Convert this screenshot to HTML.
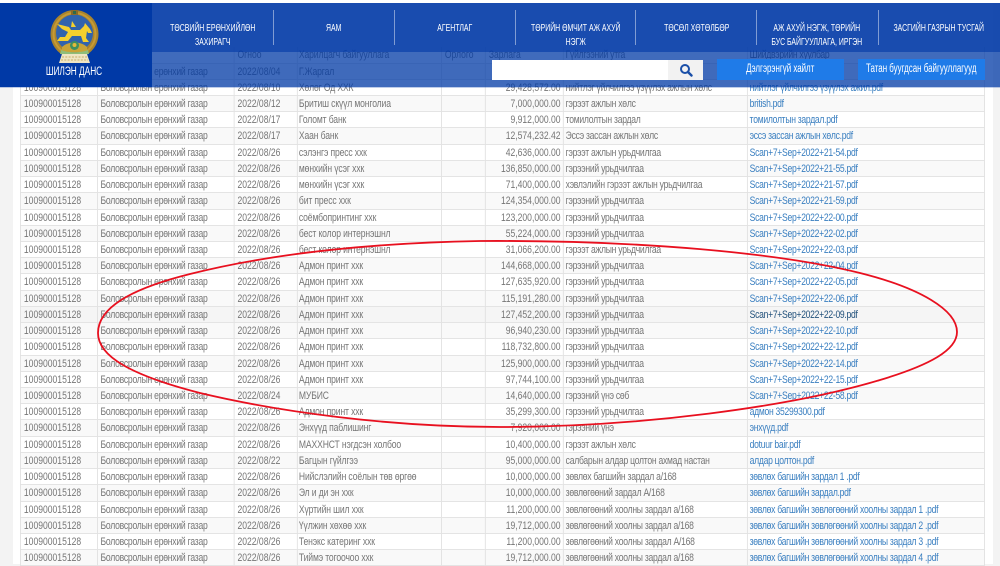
<!DOCTYPE html>
<html lang="mn">
<head>
<meta charset="utf-8">
<title>Шилэн данс</title>
<style>
html,body{margin:0;padding:0;width:1000px;height:564px;overflow:hidden;background:#f3f3f3;font-family:"Liberation Sans","DejaVu Sans",sans-serif}
#paper{position:absolute;left:13px;top:3px;width:980px;height:561px;background:#fff}
#top{position:absolute;left:0;top:0;width:1000px;height:3px;background:#fff}
#tbl{position:absolute;left:20px;top:47.4px;width:1237.2px;transform:scaleX(.78);transform-origin:0 0;font-size:11px;color:#767676;filter:blur(.35px)}
.r{display:grid;grid-template-columns:98.7px 175.6px 80.8px 184.6px 56.4px 100px 235.9px 305.2px;height:16.22px;box-sizing:border-box;line-height:16.6px;white-space:nowrap}
.r:nth-child(even){background:#f9f9f9}
.r.h{background:#f5f5f5}
.r span{display:block;box-sizing:border-box;height:16.22px;padding:0 3px 0 4px;border-left:1px solid #ddd;border-bottom:1px solid #e4e4e4;overflow:hidden}
.r span:nth-child(2){letter-spacing:-.3px;padding-left:3.5px}
.r span:nth-child(3){padding-left:3.5px}
.r span:nth-child(4){letter-spacing:-.17px;padding-left:1.5px}
.r span:nth-child(6){text-align:right}
.r span:nth-child(7){letter-spacing:-.33px;padding-left:2.5px}
.r span:last-child{border-right:1px solid #ddd;color:#3a7fc0;letter-spacing:-.36px;padding-left:2.5px}
.r.h span:last-child{color:#23527c}
#logoBlock{position:absolute;left:0;top:3px;width:152px;height:84px;background:#0039a6}
#band1{position:absolute;left:152px;top:3px;width:848px;height:49px;background:rgba(0,57,166,.9)}
#band2{position:absolute;left:152px;top:52px;width:848px;height:35px;background:rgba(0,57,166,.75)}
#shade{position:absolute;left:0;top:87px;width:1000px;height:1px;background:rgba(0,57,166,.25)}
.nav{position:absolute;top:22px;height:26px;width:121px;text-align:center;color:#fff;font-size:10.5px;line-height:13.5px;white-space:nowrap}
.nav b{display:block;font-weight:normal;width:150%;margin-left:-25%;transform:scaleX(.66)}
.div{position:absolute;top:10px;width:1px;height:35px;background:rgba(255,255,255,.45)}
#brand{position:absolute;left:14px;top:64.5px;width:120px;text-align:center;color:#fff;font-size:11.5px;line-height:15px}
#brand b{display:block;font-weight:normal;transform:scaleX(.72)}
#input{position:absolute;left:492px;top:60px;width:176px;height:20px;background:#fff}
#sbtn{position:absolute;left:668px;top:60px;width:35px;height:20px;background:#f2f2f2}
.btn{position:absolute;top:59px;width:127px;height:21px;background:#1f7be8;color:#fff;font-size:11.5px;line-height:21px;text-align:center;white-space:nowrap}
.btn b{display:block;font-weight:normal;width:150%;margin-left:-25%;transform:scaleX(.69)}
svg{position:absolute}
</style>
</head>
<body>
<div id="paper"></div>
<div id="top"></div>
<div id="tbl">
<div class="r"><span></span><span></span><span>Огноо</span><span>Харилцагч байгууллага</span><span>Орлого</span><span style="text-align:left">Зарлага</span><span>Гүйлгээний утга</span><span style="color:#666">Шийдвэрийн хуулбар</span></div>
<div class="r"><span>100900015128</span><span>Боловсролын ерөнхий газар</span><span>2022/08/04</span><span>Г.Жаргал</span><span></span><span></span><span></span><span></span></div>
<div class="r"><span>100900015128</span><span>Боловсролын ерөнхий газар</span><span>2022/08/10</span><span>Хөлөг Од ХХК</span><span></span><span>29,428,572.00</span><span>нийтлэг үйлчилгээ үзүүлэх ажлын хөлс</span><span>нийтлэг үйлчилгээ үзүүлэх ажил.pdf</span></div>
<div class="r"><span>100900015128</span><span>Боловсролын ерөнхий газар</span><span>2022/08/12</span><span>Бритиш скүүл монголиа</span><span></span><span>7,000,000.00</span><span>гэрээт ажлын хөлс</span><span>british.pdf</span></div>
<div class="r"><span>100900015128</span><span>Боловсролын ерөнхий газар</span><span>2022/08/17</span><span>Голомт банк</span><span></span><span>9,912,000.00</span><span>томилолтын зардал</span><span>томилолтын зардал.pdf</span></div>
<div class="r"><span>100900015128</span><span>Боловсролын ерөнхий газар</span><span>2022/08/17</span><span>Хаан банк</span><span></span><span>12,574,232.42</span><span>Эссэ зассан ажлын хөлс</span><span>эссэ зассан ажлын хөлс.pdf</span></div>
<div class="r"><span>100900015128</span><span>Боловсролын ерөнхий газар</span><span>2022/08/26</span><span>сэлэнгэ пресс ххк</span><span></span><span>42,636,000.00</span><span>гэрээт ажлын урьдчилгаа</span><span>Scan+7+Sep+2022+21-54.pdf</span></div>
<div class="r"><span>100900015128</span><span>Боловсролын ерөнхий газар</span><span>2022/08/26</span><span>мөнхийн үсэг ххк</span><span></span><span>136,850,000.00</span><span>гэрээний урьдчилгаа</span><span>Scan+7+Sep+2022+21-55.pdf</span></div>
<div class="r"><span>100900015128</span><span>Боловсролын ерөнхий газар</span><span>2022/08/26</span><span>мөнхийн үсэг ххк</span><span></span><span>71,400,000.00</span><span>хэвлэлийн гэрээт ажлын урьдчилгаа</span><span>Scan+7+Sep+2022+21-57.pdf</span></div>
<div class="r"><span>100900015128</span><span>Боловсролын ерөнхий газар</span><span>2022/08/26</span><span>бит пресс ххк</span><span></span><span>124,354,000.00</span><span>гэрээний урьдчилгаа</span><span>Scan+7+Sep+2022+21-59.pdf</span></div>
<div class="r"><span>100900015128</span><span>Боловсролын ерөнхий газар</span><span>2022/08/26</span><span>соёмбопринтинг ххк</span><span></span><span>123,200,000.00</span><span>гэрээний урьдчилгаа</span><span>Scan+7+Sep+2022+22-00.pdf</span></div>
<div class="r"><span>100900015128</span><span>Боловсролын ерөнхий газар</span><span>2022/08/26</span><span>бест колор интернэшнл</span><span></span><span>55,224,000.00</span><span>гэрээний урьдчилгаа</span><span>Scan+7+Sep+2022+22-02.pdf</span></div>
<div class="r"><span>100900015128</span><span>Боловсролын ерөнхий газар</span><span>2022/08/26</span><span>бест колор интернэшнл</span><span></span><span>31,066,200.00</span><span>гэрээт ажлын урьдчилгаа</span><span>Scan+7+Sep+2022+22-03.pdf</span></div>
<div class="r"><span>100900015128</span><span>Боловсролын ерөнхий газар</span><span>2022/08/26</span><span>Адмон принт ххк</span><span></span><span>144,668,000.00</span><span>гэрээний урьдчилгаа</span><span>Scan+7+Sep+2022+22-04.pdf</span></div>
<div class="r"><span>100900015128</span><span>Боловсролын ерөнхий газар</span><span>2022/08/26</span><span>Адмон принт ххк</span><span></span><span>127,635,920.00</span><span>гэрээний урьдчилгаа</span><span>Scan+7+Sep+2022+22-05.pdf</span></div>
<div class="r"><span>100900015128</span><span>Боловсролын ерөнхий газар</span><span>2022/08/26</span><span>Адмон принт ххк</span><span></span><span>115,191,280.00</span><span>гэрээний урьдчилгаа</span><span>Scan+7+Sep+2022+22-06.pdf</span></div>
<div class="r h"><span>100900015128</span><span>Боловсролын ерөнхий газар</span><span>2022/08/26</span><span>Адмон принт ххк</span><span></span><span>127,452,200.00</span><span>гэрээний урьдчилгаа</span><span>Scan+7+Sep+2022+22-09.pdf</span></div>
<div class="r"><span>100900015128</span><span>Боловсролын ерөнхий газар</span><span>2022/08/26</span><span>Адмон принт ххк</span><span></span><span>96,940,230.00</span><span>гэрээний урьдчилгаа</span><span>Scan+7+Sep+2022+22-10.pdf</span></div>
<div class="r"><span>100900015128</span><span>Боловсролын ерөнхий газар</span><span>2022/08/26</span><span>Адмон принт ххк</span><span></span><span>118,732,800.00</span><span>гэрээний урьдчилгаа</span><span>Scan+7+Sep+2022+22-12.pdf</span></div>
<div class="r"><span>100900015128</span><span>Боловсролын ерөнхий газар</span><span>2022/08/26</span><span>Адмон принт ххк</span><span></span><span>125,900,000.00</span><span>гэрээний урьдчилгаа</span><span>Scan+7+Sep+2022+22-14.pdf</span></div>
<div class="r"><span>100900015128</span><span>Боловсролын ерөнхий газар</span><span>2022/08/26</span><span>Адмон принт ххк</span><span></span><span>97,744,100.00</span><span>гэрээний урьдчилгаа</span><span>Scan+7+Sep+2022+22-15.pdf</span></div>
<div class="r"><span>100900015128</span><span>Боловсролын ерөнхий газар</span><span>2022/08/24</span><span>МУБИС</span><span></span><span>14,640,000.00</span><span>гэрээний үнэ сөб</span><span>Scan+7+Sep+2022+22-58.pdf</span></div>
<div class="r"><span>100900015128</span><span>Боловсролын ерөнхий газар</span><span>2022/08/26</span><span>Адмон принт ххк</span><span></span><span>35,299,300.00</span><span>гэрээний урьдчилгаа</span><span>адмон 35299300.pdf</span></div>
<div class="r"><span>100900015128</span><span>Боловсролын ерөнхий газар</span><span>2022/08/26</span><span>Энхүүд паблишинг</span><span></span><span>7,920,000.00</span><span>гэрээний үнэ</span><span>энхүүд.pdf</span></div>
<div class="r"><span>100900015128</span><span>Боловсролын ерөнхий газар</span><span>2022/08/26</span><span>МАХХНСТ нэгдсэн холбоо</span><span></span><span>10,400,000.00</span><span>гэрээт ажлын хөлс</span><span>dotuur bair.pdf</span></div>
<div class="r"><span>100900015128</span><span>Боловсролын ерөнхий газар</span><span>2022/08/22</span><span>Багцын гүйлгээ</span><span></span><span>95,000,000.00</span><span>салбарын алдар цолтон ахмад настан</span><span>алдар цолтон.pdf</span></div>
<div class="r"><span>100900015128</span><span>Боловсролын ерөнхий газар</span><span>2022/08/26</span><span>Нийслэлийн соёлын төв өргөө</span><span></span><span>10,000,000.00</span><span>зөвлөх багшийн зардал а/168</span><span>зөвлөх багшийн зардал 1 .pdf</span></div>
<div class="r"><span>100900015128</span><span>Боловсролын ерөнхий газар</span><span>2022/08/26</span><span>Эл и ди эн ххк</span><span></span><span>10,000,000.00</span><span>зөвлөгөөний зардал А/168</span><span>зөвлөх багшийн зардал.pdf</span></div>
<div class="r"><span>100900015128</span><span>Боловсролын ерөнхий газар</span><span>2022/08/26</span><span>Хүртийн шил ххк</span><span></span><span>11,200,000.00</span><span>зөвлөгөөний хоолны зардал а/168</span><span>зөвлөх багшийн зөвлөгөөний хоолны зардал 1 .pdf</span></div>
<div class="r"><span>100900015128</span><span>Боловсролын ерөнхий газар</span><span>2022/08/26</span><span>Үүлжин хөхөө ххк</span><span></span><span>19,712,000.00</span><span>зөвлөгөөний хоолны зардал а/168</span><span>зөвлөх багшийн зөвлөгөөний хоолны зардал 2 .pdf</span></div>
<div class="r"><span>100900015128</span><span>Боловсролын ерөнхий газар</span><span>2022/08/26</span><span>Тенэкс катеринг ххк</span><span></span><span>11,200,000.00</span><span>зөвлөгөөний хоолны зардал А/168</span><span>зөвлөх багшийн зөвлөгөөний хоолны зардал 3 .pdf</span></div>
<div class="r"><span>100900015128</span><span>Боловсролын ерөнхий газар</span><span>2022/08/26</span><span>Тиймэ тогоочоо ххк</span><span></span><span>19,712,000.00</span><span>зөвлөгөөний хоолны зардал а/168</span><span>зөвлөх багшийн зөвлөгөөний хоолны зардал 4 .pdf</span></div>
</div>

<svg width="1000" height="564" style="left:0;top:0" viewBox="0 0 1000 564">
<path d="M480 241C370 243 270 254 190 274C130 289 98 308 98 333C98 356 130 375 200 393C280 412 390 427 500 427C640 427 790 407 880 380C930 365 957 350 957 332C957 310 920 288 860 273C780 253 640 240 480 241Z" fill="none" stroke="#e8101f" stroke-width="1.8"/>
</svg>

<div id="logoBlock"></div>
<div id="band1"></div>
<div id="band2"></div>
<div id="shade"></div>

<svg width="60" height="60" style="left:45px;top:8px" viewBox="45 8 60 60">
<circle cx="74.5" cy="34" r="24" fill="#a8842e"/>
<circle cx="74.5" cy="34" r="21" fill="none" stroke="#c69a34" stroke-width="2"/>
<circle cx="74.5" cy="33" r="18.5" fill="#3163ac"/>
<rect x="71" y="10" width="7" height="5" fill="#8a6a2a"/>
<rect x="73" y="11" width="3" height="3" fill="#2d6a4a"/>
<path d="M57 24L69 27L71 30H80L84 26L85 23L90 29L92 33L88 33L87 31L86 38L89 42H83L81 36H72L68 41H57L60 37H65L68 32L62 29Z" fill="#f5d02e"/>
<path d="M72 21L76 27H71Z" fill="#f5d02e"/>
<path d="M62 47C68 41 81 41 87 47V52H62Z" fill="#c9a436"/>
<circle cx="74.5" cy="45.5" r="4.5" fill="#3f8f5e"/>
<circle cx="74.5" cy="45" r="2" fill="#e3b93a"/>
<path d="M61 50C68 53 81 53 88 50L89 54H60Z" fill="#8fbe7a"/>
<path d="M62 54H87L90 63H59Z" fill="#efe6c4"/>
<path d="M62 57H87M61 60H88" stroke="#b79a4a" stroke-width=".7" stroke-dasharray="2 1.3"/>
</svg>
<div id="brand"><b>ШИЛЭН ДАНС</b></div>

<div class="div" style="left:273px"></div>
<div class="div" style="left:394px"></div>
<div class="div" style="left:515px"></div>
<div class="div" style="left:635px"></div>
<div class="div" style="left:756px"></div>
<div class="div" style="left:878px"></div>

<div class="nav" style="left:152px"><b>ТӨСВИЙН ЕРӨНХИЙЛӨН</b><b>ЗАХИРАГЧ</b></div>
<div class="nav" style="left:273px"><b>ЯАМ</b></div>
<div class="nav" style="left:394px"><b>АГЕНТЛАГ</b></div>
<div class="nav" style="left:515px"><b>ТӨРИЙН ӨМЧИТ АЖ АХУЙ</b><b>НЭГЖ</b></div>
<div class="nav" style="left:636px"><b>ТӨСӨЛ ХӨТӨЛБӨР</b></div>
<div class="nav" style="left:756px"><b>АЖ АХУЙ НЭГЖ, ТӨРИЙН</b><b>БУС БАЙГУУЛЛАГА, ИРГЭН</b></div>
<div class="nav" style="left:878px"><b>ЗАСГИЙН ГАЗРЫН ТУСГАЙ</b></div>

<div id="input"></div>
<div id="sbtn"></div>
<svg width="14" height="14" style="left:679px;top:63px" viewBox="0 0 14 14">
<circle cx="6" cy="6" r="4" fill="none" stroke="#1a4fa8" stroke-width="2"/>
<path d="M9 9L12.5 12.5" stroke="#1a4fa8" stroke-width="2.4" stroke-linecap="round"/>
</svg>
<div class="btn" style="left:717px"><b>Дэлгэрэнгүй хайлт</b></div>
<div class="btn" style="left:858px"><b>Татан буугдсан байгууллагууд</b></div>
</body>
</html>
